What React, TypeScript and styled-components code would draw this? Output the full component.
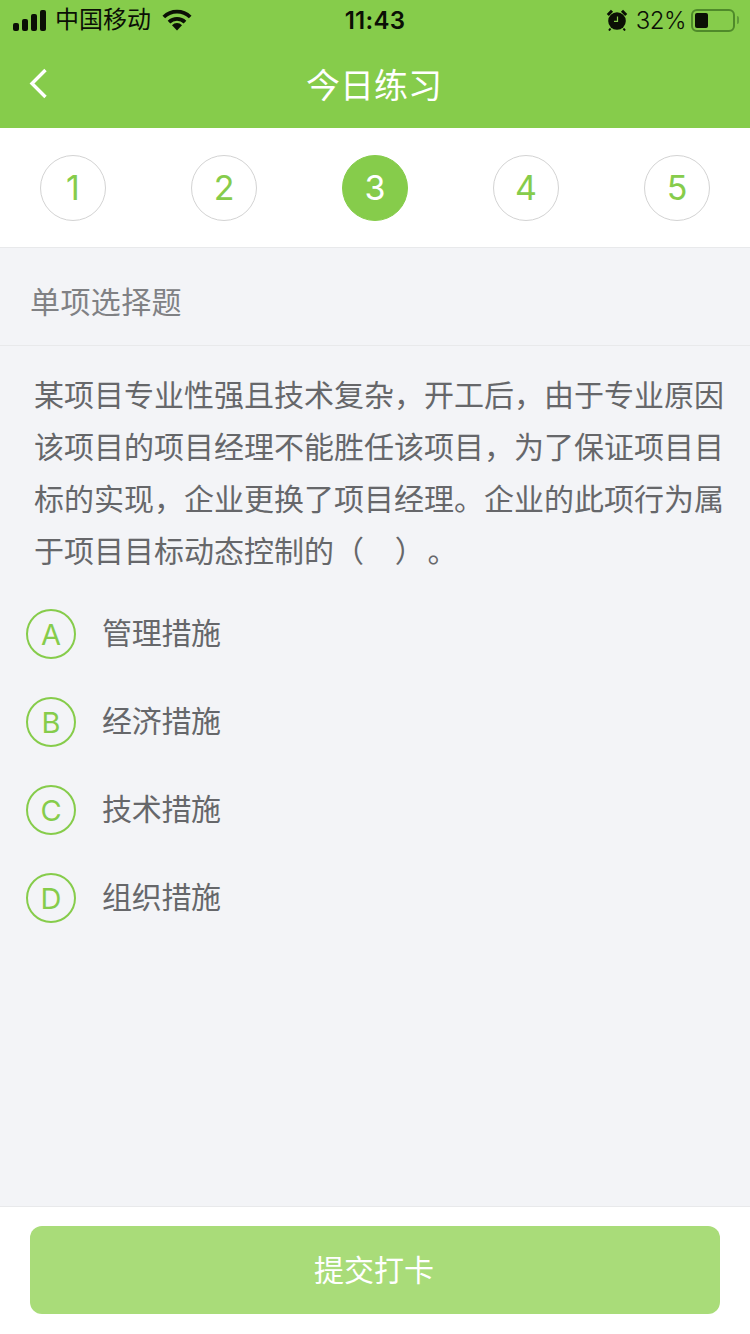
import React from "react";
import styled, { createGlobalStyle } from "styled-components";

const steps = [1, 2, 3, 4, 5];
const options = [
  { key: "A", text: "管理措施" },
  { key: "B", text: "经济措施" },
  { key: "C", text: "技术措施" },
  { key: "D", text: "组织措施" },
];
const questionLines = [
  "某项目专业性强且技术复杂，开工后，由于专业原因",
  "该项目的项目经理不能胜任该项目，为了保证项目目",
  "标的实现，企业更换了项目经理。企业的此项行为属",
  "于项目目标动态控制的（   \u2009）\u200A。",
];

const App = () => {
  return (
    <Page>
      <GlobalStyle />
      <Header>
        <StatusBar>
          <StatusLeft>
            <svg width="33" height="21" viewBox="0 0 33 21">
              <rect x="0" y="13" width="6" height="8" rx="2" fill="#0b0f05" />
              <rect x="9" y="9" width="6" height="12" rx="2" fill="#0b0f05" />
              <rect x="18" y="4" width="6" height="17" rx="2" fill="#0b0f05" />
              <rect x="27" y="0" width="6" height="21" rx="2" fill="#0b0f05" />
            </svg>
            <Carrier>中国移动</Carrier>
            <WifiIcon width="30" height="22" viewBox="0 0 30 22">
              <path d="M1.8 8 A19 19 0 0 1 28.2 8" fill="none" stroke="#0b0f05" strokeWidth="3.8" />
              <path d="M7 13.2 A11.5 11.5 0 0 1 23 13.2" fill="none" stroke="#0b0f05" strokeWidth="3.8" />
              <path d="M10 16.2 A7 7 0 0 1 20 16.2 L15 21.5 Z" fill="#0b0f05" />
            </WifiIcon>
          </StatusLeft>
          <Clock>11:43</Clock>
          <StatusRight>
            <svg width="22" height="22" viewBox="0 0 22 22">
              <circle cx="11" cy="12" r="8.8" fill="#0b0f05" />
              <path d="M1.8 6 L6 1.8 M20.2 6 L16 1.8" stroke="#0b0f05" strokeWidth="3" />
              <path d="M4.5 19.5 L3 21.5 M17.5 19.5 L19 21.5" stroke="#0b0f05" strokeWidth="2" />
              <path d="M11.5 7.5 V12.4 H8" fill="none" stroke="#86cc4b" strokeWidth="1.2" />
            </svg>
            <Percent>32%</Percent>
            <Battery>
              <BatteryLevel />
            </Battery>
            <BatteryCap />
          </StatusRight>
        </StatusBar>
        <NavBar>
          <BackIcon width="20" height="32" viewBox="0 0 20 32">
            <path d="M16.5 2 L3 15.5 L16.5 29" fill="none" stroke="#fff" strokeWidth="3.4" />
          </BackIcon>
          <NavTitle>今日练习</NavTitle>
        </NavBar>
      </Header>

      <Steps>
        {steps.map((step) => (
          <Step key={step} $active={step === 3}>
            {step}
          </Step>
        ))}
      </Steps>

      <Main>
        <TypeRow>单项选择题</TypeRow>
        <Question>
          {questionLines.map((line) => (
            <QuestionLine key={line}>{line}</QuestionLine>
          ))}
        </Question>
        <OptionList>
          {options.map((option) => (
            <Option key={option.key}>
              <OptionBadge>{option.key}</OptionBadge>
              <OptionText>{option.text}</OptionText>
            </Option>
          ))}
        </OptionList>
      </Main>

      <Footer>
        <SubmitButton>提交打卡</SubmitButton>
      </Footer>
    </Page>
  );
};

const GlobalStyle = createGlobalStyle`
  html, body {
    margin: 0;
    padding: 0;
  }
  body {
    font-family: "Inter", "Noto Sans CJK SC", sans-serif;
  }
`;

const Page = styled.div`
  width: 750px;
  height: 1334px;
  display: flex;
  flex-direction: column;
  background-color: #f3f4f7;
  overflow: hidden;
`;

const Header = styled.header`
  height: 128px;
  background-color: #86cc4b;
  display: flex;
  flex-direction: column;
`;

const StatusBar = styled.div`
  height: 40px;
  display: grid;
  grid-template-columns: 1fr auto 1fr;
  align-items: center;
  padding: 0 11px 0 13px;
  color: #0b0f05;
`;

const StatusLeft = styled.div`
  display: flex;
  align-items: center;
  gap: 9px;
`;

const WifiIcon = styled.svg`
  margin-left: 2px;
`;

const Carrier = styled.span`
  font-size: 24px;
  line-height: 40px;
`;

const Clock = styled.span`
  font-size: 24px;
  font-weight: 600;
  letter-spacing: 0.3px;
  margin-left: -2px;
`;

const StatusRight = styled.div`
  display: flex;
  align-items: center;
  justify-content: flex-end;
`;

const Percent = styled.span`
  font-size: 24px;
  font-weight: 300;
  letter-spacing: -0.5px;
  margin-left: 8px;
  margin-right: 5px;
`;

const Battery = styled.div`
  width: 44px;
  height: 23px;
  box-sizing: border-box;
  border: 2px solid #4f8a2a;
  border-radius: 6px;
  padding: 2px;
`;

const BatteryLevel = styled.div`
  width: 13px;
  height: 100%;
  background-color: #0b0f05;
  border-radius: 2px;
`;

const BatteryCap = styled.div`
  width: 2px;
  height: 8px;
  margin-left: 2px;
  background-color: #5f9c38;
  border-radius: 0 2px 2px 0;
`;

const NavBar = styled.div`
  position: relative;
  height: 88px;
  box-sizing: border-box;
  padding: 0 2px 2px 0;
  display: flex;
  align-items: center;
  justify-content: center;
`;

const BackIcon = styled.svg`
  position: absolute;
  left: 29px;
  top: 28px;
`;

const NavTitle = styled.h1`
  margin: 0;
  font-size: 34px;
  font-weight: 400;
  color: #fff;
`;

const Steps = styled.div`
  height: 120px;
  box-sizing: border-box;
  padding: 0 40px;
  display: flex;
  align-items: center;
  justify-content: space-between;
  background-color: #fff;
  border-bottom: 1px solid #e8e9eb;
`;

const Step = styled.div<{ $active?: boolean }>`
  width: 66px;
  height: 66px;
  box-sizing: border-box;
  border-radius: 50%;
  border: 1px solid ${(p) => (p.$active ? "#86cc4b" : "#d3d3d3")};
  background-color: ${(p) => (p.$active ? "#86cc4b" : "#fff")};
  color: ${(p) => (p.$active ? "#fff" : "#86cc4b")};
  display: flex;
  align-items: center;
  justify-content: center;
  font-size: 34px;
`;

const Main = styled.main`
  flex: 1;
  display: flex;
  flex-direction: column;
`;

const TypeRow = styled.div`
  height: 98px;
  box-sizing: border-box;
  padding: 6px 30px 0;
  display: flex;
  align-items: center;
  border-bottom: 1px solid #e8e9eb;
  font-size: 30px;
  letter-spacing: 0.4px;
  color: #808184;
`;

const Question = styled.div`
  padding: 23px 26px 0 34px;
`;

const QuestionLine = styled.div`
  height: 52px;
  line-height: 52px;
  font-size: 30px;
  color: #66676a;
  white-space: pre;
`;

const OptionList = styled.div`
  margin-top: 13px;
  padding-left: 26px;
  display: flex;
  flex-direction: column;
`;

const Option = styled.div`
  height: 88px;
  display: flex;
  align-items: center;
  gap: 26px;
`;

const OptionBadge = styled.div`
  width: 50px;
  height: 50px;
  box-sizing: border-box;
  border-radius: 50%;
  border: 2px solid #86cc4b;
  color: #86cc4b;
  font-size: 29px;
  display: flex;
  align-items: center;
  justify-content: center;
`;

const OptionText = styled.span`
  font-size: 30px;
  letter-spacing: -0.3px;
  color: #66676a;
  margin-top: -6px;
`;

const Footer = styled.footer`
  height: 128px;
  box-sizing: border-box;
  padding: 19px 30px 0;
  background-color: #fff;
  border-top: 1px solid #e8e9eb;
`;

const SubmitButton = styled.button`
  width: 100%;
  height: 88px;
  border: none;
  border-radius: 12px;
  padding: 0 2px 4px 0;
  background-color: #a9dc79;
  color: #fff;
  font-family: inherit;
  font-size: 30px;
`;

export default App;
